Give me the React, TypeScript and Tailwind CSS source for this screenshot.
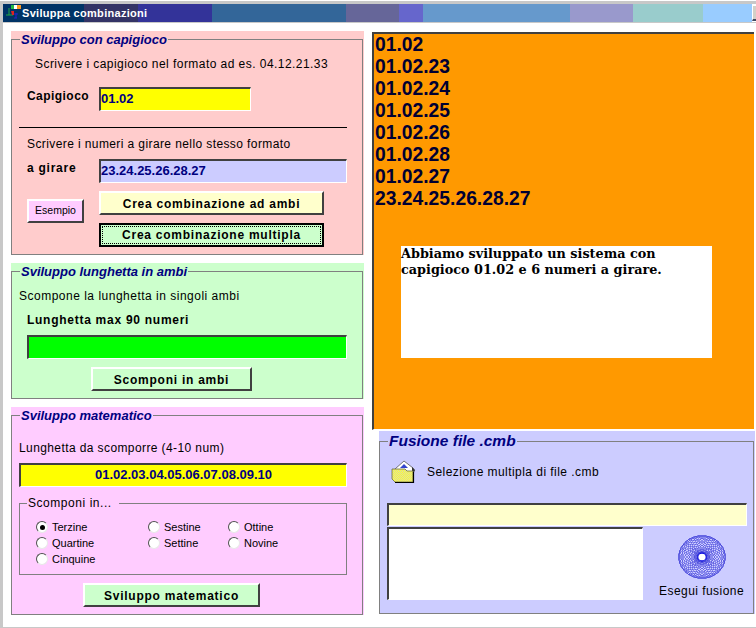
import React from "react";

const sunken =
  "border-t-2 border-l-2 border-r border-b border-t-[#404040] border-l-[#404040] border-r-white border-b-white";
const raised =
  "border-t-2 border-l-2 border-r-2 border-b-2 border-t-white border-l-white border-r-[#404040] border-b-[#404040]";
const legendText = "font-bold italic text-[13px] leading-[16px] text-[#000080] ml-[8px] px-[1px] pt-px h-[16px]";

const titleSegments = [
  { w: "w-[81px]", bg: "bg-[#003366]" },
  { w: "w-[54px]", bg: "bg-[#333366]" },
  { w: "w-[74px]", bg: "bg-[#333399]" },
  { w: "w-[134px]", bg: "bg-[#336699]" },
  { w: "w-[53px]", bg: "bg-[#666699]" },
  { w: "w-[24px]", bg: "bg-[#6666cc]" },
  { w: "w-[147px]", bg: "bg-[#6699cc]" },
  { w: "w-[63px]", bg: "bg-[#9999cc]" },
  { w: "w-[70px]", bg: "bg-[#99cccc]" },
  { w: "w-[49px]", bg: "bg-[#99ccff]" },
];

const lines = ["01.02", "01.02.23", "01.02.24", "01.02.25", "01.02.26", "01.02.28", "01.02.27", "23.24.25.26.28.27"];

const radios = ["Terzine", "Sestine", "Ottine", "Quartine", "Settine", "Novine", "Cinquine"];

function Radio({ label, checked }: { label: string; checked?: boolean }) {
  return (
    <div className="flex items-center h-[16px] gap-[4px]">
      <div className="w-[12px] h-[12px] rounded-full bg-white border border-[#505050] border-r-[#e8e8e8] border-b-[#e8e8e8] flex items-center justify-center">
        {checked ? <div className="w-[5px] h-[5px] rounded-full bg-black" /> : null}
      </div>
      <span className="text-[11px] text-black">{label}</span>
    </div>
  );
}

function AppIcon() {
  return (
    <svg width="17" height="16" viewBox="0 0 17 16" className="ml-[2px] shrink-0">
      <rect x="6" y="0" width="3" height="4" fill="#22bb44" />
      <rect x="9" y="0" width="3" height="4" fill="#ffffff" />
      <rect x="12" y="0" width="4" height="4" fill="#ff9922" />
      <path d="M4 3V10M1 10H8" stroke="#22aa44" strokeWidth="1" fill="none" />
      <path d="M6 6H9V10H7Z" fill="#dd2222" />
      <path d="M9 9H13M11 8V13M9 13H12" stroke="#2222cc" strokeWidth="1" fill="none" />
    </svg>
  );
}

function FolderIcon() {
  return (
    <svg width="25" height="24" viewBox="0 0 25 24" className="shrink-0">
      <defs>
        <pattern id="chk" width="2" height="2" patternUnits="userSpaceOnUse">
          <rect width="2" height="2" fill="#ffff33" />
          <rect width="1" height="1" fill="#d8d8a8" />
          <rect x="1" y="1" width="1" height="1" fill="#d8d8a8" />
        </pattern>
      </defs>
      <path d="M4 9L13 1L22 8L23 10L20 14H6Z" fill="#ffffff" stroke="#555555" strokeWidth="0.8" />
      <path d="M9 8L13 4L17 8Z" fill="#3344cc" />
      <path d="M21 7L24 10L22 15H21Z" fill="#333333" />
      <path d="M1 9H14L16 11H22V22H4L1 19Z" fill="url(#chk)" stroke="#6a6a40" strokeWidth="0.8" />
      <path d="M4 22.5H22.5V12" stroke="#000000" strokeWidth="1.2" fill="none" />
    </svg>
  );
}

function SpiralIcon() {
  const rings = Array.from({ length: 28 }, (_, i) => (i * 360) / 28);
  return (
    <svg width="48" height="44" viewBox="-25 -25 50 50" preserveAspectRatio="none" className="shrink-0">
      {rings.map((a) => (
        <circle
          key={a}
          cx={9.9 * Math.cos((a * Math.PI) / 180)}
          cy={9.9 * Math.sin((a * Math.PI) / 180)}
          r={14.7}
          fill="none"
          stroke="#3a3ad8"
          strokeWidth="0.5"
          shapeRendering="crispEdges"
        />
      ))}
      <circle r="4.4" fill="#ffffff" stroke="#1010e0" strokeWidth="1.2" />
    </svg>
  );
}

export default function App() {
  return (
    <div
      className="w-[756px] h-[628px] bg-white overflow-hidden flex flex-col border-t border-t-white border-b border-b-[#c8c8c8]"
      style={{ fontFamily: '"Liberation Sans", Arial, sans-serif' }}
    >
      <div className="h-[3px] bg-[#c8c8c8] shrink-0" />
      <div className="flex-1 flex flex-col border-l-[3px] border-l-[#c8c8c8]">
        {/* title bar */}
        <div className="relative flex h-[19px] border-b border-b-[#c8c8c8] shrink-0">
          {titleSegments.map((s) => (
            <div key={s.bg} className={`${s.w} ${s.bg} shrink-0`} />
          ))}
          <div className="w-[4px] shrink-0 bg-[#d4d0c8] mt-[2px] mb-[1px] border-b-2 border-b-[#404860] border-l border-l-white" />
          <div className="absolute left-0 top-0 h-[18px] flex items-center">
            <AppIcon />
            <span className="text-white font-bold text-[11px] tracking-[0.3px]">Sviluppa combinazioni</span>
          </div>
        </div>

        <div className="flex pl-[8px] pt-[8px]">
          {/* left column */}
          <div className="w-[353px] shrink-0 flex flex-col gap-[8px]">
            <div className="bg-[#ffcccc]">
              <fieldset className="w-[352px] border border-[#808080] pb-[7px]">
                <legend className={legendText}>Sviluppo con capigioco</legend>
                <p className="mt-[9px] ml-[23px] text-[12px] leading-[16px] text-black tracking-[0.45px]">
                  Scrivere i capigioco nel formato ad es. 04.12.21.33
                </p>
                <div className="mt-[15px] ml-[15px] flex">
                  <span className="mt-px w-[72px] text-[12px] leading-[16px] font-bold text-black tracking-[0.45px]">Capigioco</span>
                  <div className={`w-[152px] h-[24px] bg-[#ffff00] ${sunken} flex items-center pb-[2px] text-[13px] font-bold text-[#000080]`}>
                    01.02
                  </div>
                </div>
                <div className="mt-[16px] ml-[7px] w-[328px] h-px bg-black" />
                <p className="mt-[8px] ml-[15px] text-[12px] leading-[16px] text-black tracking-[0.4px]">
                  Scrivere i numeri a girare nello stesso formato
                </p>
                <div className="mt-[7px] ml-[15px] flex">
                  <span className="mt-px w-[72px] text-[12px] leading-[16px] font-bold text-black tracking-[0.75px]">a girare</span>
                  <div className={`w-[248px] h-[24px] bg-[#ccccff] ${sunken} flex items-center pb-[2px] text-[13px] font-bold text-[#000080]`}>
                    23.24.25.26.28.27
                  </div>
                </div>
                <div className="mt-[8px] ml-[15px] flex">
                  <div className="w-[72px]">
                    <button className={`mt-[8px] w-[57px] h-[24px] bg-[#ffccff] ${raised} text-[10.5px] text-black`}>
                      Esempio
                    </button>
                  </div>
                  <div className="flex flex-col gap-[8px]">
                    <button className={`w-[225px] h-[24px] pt-px bg-[#ffffcc] ${raised} text-[12px] font-bold text-black tracking-[0.75px]`}>
                      Crea combinazione ad ambi
                    </button>
                    <button className="w-[225px] h-[24px] bg-[#ccffcc] border-2 border-black text-[12px] font-bold text-black tracking-[0.75px] p-[1px]">
                      <span className="flex items-center justify-center w-full h-full border border-dotted border-black">
                        Crea combinazione multipla
                      </span>
                    </button>
                  </div>
                </div>
              </fieldset>
            </div>

            <div className="bg-[#ccffcc]">
              <fieldset className="w-[352px] border border-[#808080] pb-[7px]">
                <legend className={legendText}>Sviluppo lunghetta in ambi</legend>
                <p className="mt-[9px] ml-[7px] text-[12px] leading-[16px] text-black tracking-[0.5px]">
                  Scompone la lunghetta in singoli ambi
                </p>
                <p className="mt-[8px] ml-[15px] text-[12px] leading-[16px] font-bold text-black tracking-[0.73px]">
                  Lunghetta max 90 numeri
                </p>
                <div className={`mt-[7px] ml-[15px] w-[320px] h-[24px] bg-[#00ff00] ${sunken}`} />
                <button className={`block mt-[8px] ml-[79px] w-[161px] h-[24px] pt-px bg-[#ccffcc] ${raised} text-[12px] font-bold text-black tracking-[0.75px]`}>
                  Scomponi in ambi
                </button>
              </fieldset>
            </div>

            <div className="bg-[#ffccff]">
              <fieldset className="w-[352px] border border-[#808080] pb-[7px]">
                <legend className={legendText}>Sviluppo matematico</legend>
                <p className="mt-[17px] ml-[7px] text-[12px] leading-[16px] text-black tracking-[0.4px]">
                  Lunghetta da scomporre (4-10 num)
                </p>
                <div className={`mt-[7px] ml-[7px] w-[328px] h-[24px] bg-[#ffff00] ${sunken} flex items-center justify-center pb-[2px] text-[13px] font-bold text-[#000080]`}>
                  01.02.03.04.05.06.07.08.09.10
                </div>
                <fieldset className="mt-[8px] ml-[7px] w-[328px] border border-[#808080] pb-[7px]">
                  <legend className="ml-[7px] px-[1px] pr-[7px] text-[12px] leading-[16px] text-black tracking-[0.55px]">Scomponi in...</legend>
                  <div className="mt-[8px] ml-[16px] grid grid-cols-[112px_80px_1fr]">
                    {radios.map((r, i) => (
                      <Radio key={r} label={r} checked={i === 0} />
                    ))}
                  </div>
                </fieldset>
                <button className={`block mt-[8px] ml-[71px] w-[177px] h-[24px] pt-px bg-[#ccffcc] ${raised} text-[12px] font-bold text-black tracking-[0.75px]`}>
                  Sviluppo matematico
                </button>
              </fieldset>
            </div>
          </div>

          {/* right column */}
          <div className="ml-[8px] flex flex-col">
            <div className={`mt-px w-[382px] h-[398px] bg-[#ff9900] ${sunken} border-r-0`}>
              <div className="pl-px">
                {lines.map((l, i) => (
                  <div key={i} className="text-[19.3px] leading-[22px] font-bold text-[#000033]">
                    {l}
                  </div>
                ))}
              </div>
              <div
                className="mt-[36px] ml-[27px] w-[311px] h-[112px] bg-white text-[12.8px] leading-[16px] font-bold text-black"
                style={{ fontFamily: '"DejaVu Serif", serif' }}
              >
                Abbiamo sviluppato un sistema con
                <br />
                capigioco 01.02 e 6 numeri a girare.
              </div>
            </div>

            <div className="ml-[7px] mt-px w-[376px] bg-[#ccccff]">
              <fieldset className="w-[375px] border border-[#808080] pb-[13px]">
                <legend className="ml-[8px] px-[1px] text-[15.5px] leading-[20px] font-bold italic text-[#000080]">Fusione file .cmb</legend>
                <div className="mt-[9px] ml-[11px] flex items-center gap-[11px]">
                  <FolderIcon />
                  <span className="text-[12px] text-black tracking-[0.45px]">Selezione multipla di file .cmb</span>
                </div>
                <div className={`mt-[19px] ml-[7px] w-[360px] h-[23px] bg-[#ffffcc] ${sunken}`} />
                <div className="mt-px ml-[7px] flex">
                  <div className={`w-[256px] h-[73px] bg-white ${sunken}`} />
                  <div className="flex-1 flex flex-col items-center pt-[8px] pl-[7px]">
                    <SpiralIcon />
                    <span className="mt-[4px] text-[12px] leading-[16px] text-black tracking-[0.45px]">Esegui fusione</span>
                  </div>
                </div>
              </fieldset>
            </div>
          </div>
        </div>
      </div>
    </div>
  );
}
